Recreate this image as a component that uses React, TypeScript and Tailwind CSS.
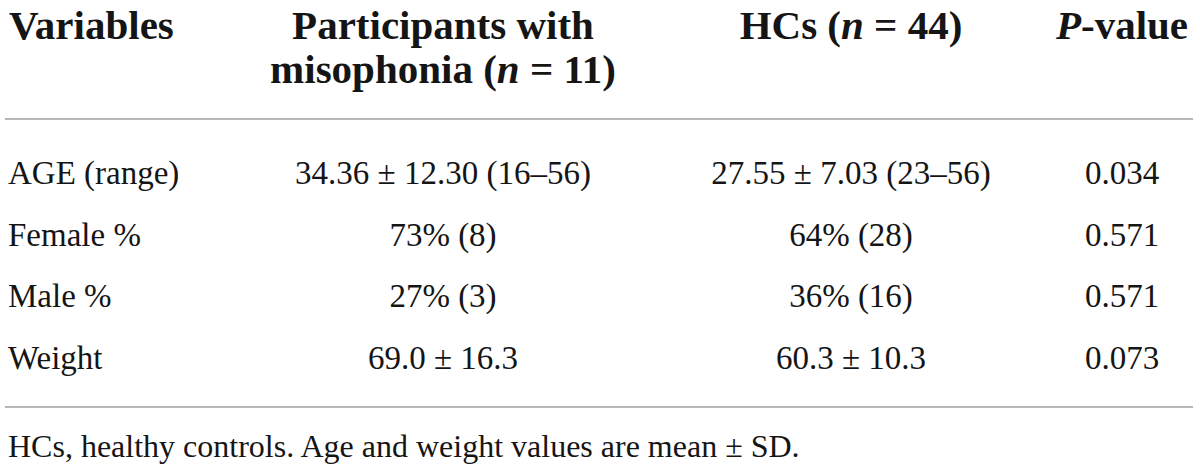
import React from "react";

const rows = [
  ["AGE (range)", "34.36 ± 12.30 (16–56)", "27.55 ± 7.03 (23–56)", "0.034"],
  ["Female %", "73% (8)", "64% (28)", "0.571"],
  ["Male %", "27% (3)", "36% (16)", "0.571"],
  ["Weight", "69.0 ± 16.3", "60.3 ± 10.3", "0.073"],
];

export default function App() {
  return (
    <div
      className="w-[1200px] h-[470px] bg-white text-[#151515] overflow-hidden"
      style={{ fontFamily: '"Liberation Serif", "Times New Roman", serif' }}
    >
      <div className="ml-[5px] w-[1188px]">
        <div className="grid grid-cols-[230px_416px_400px_142px] pt-[3px] pb-[27px] text-[41px] leading-[44px] font-bold border-b-2 border-[#b8b8b8]">
          <div className="pl-[4px]">Variables</div>
          <div className="text-center">
            Participants with
            <br />
            misophonia (<i>n</i> = 11)
          </div>
          <div className="text-center">
            HCs (<i>n</i> = 44)
          </div>
          <div className="text-center">
            <i>P</i>-value
          </div>
        </div>
        <div className="pt-[23px] pb-[16px] border-b-2 border-[#b8b8b8] text-[33px] leading-[61.7px]">
          {rows.map((r, i) => (
            <div key={i} className="grid grid-cols-[230px_416px_400px_142px]">
              <div className="pl-[3px]">{r[0]}</div>
              <div className="text-center">{r[1]}</div>
              <div className="text-center">{r[2]}</div>
              <div className="text-center">{r[3]}</div>
            </div>
          ))}
        </div>
        <div className="pt-[18px] pl-[3px] text-[32px] leading-[40px]">
          HCs, healthy controls. Age and weight values are mean ± SD.
        </div>
      </div>
    </div>
  );
}
